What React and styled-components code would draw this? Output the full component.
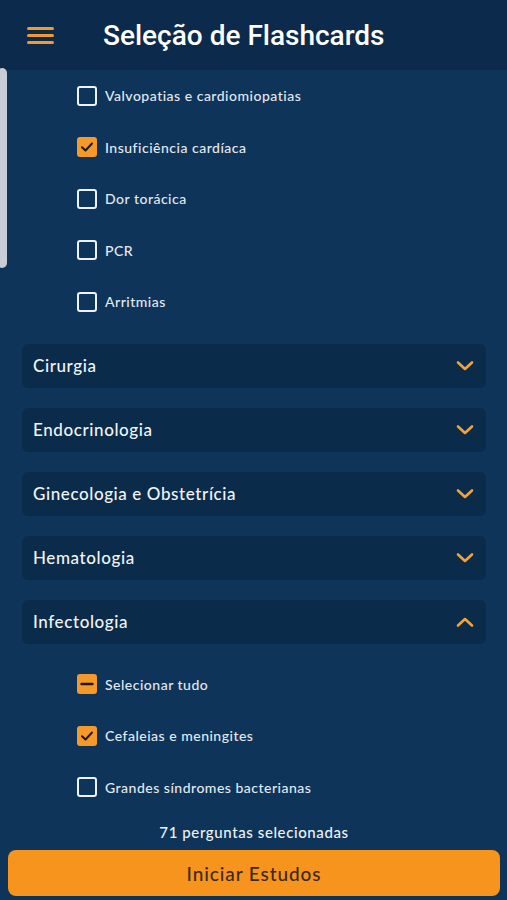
import React from "react";
import styled, { createGlobalStyle } from "styled-components";

const Global = createGlobalStyle`
  html, body { margin: 0; padding: 0; background: #0f345a; }
  * { box-sizing: border-box; }
`;

const Page = styled.div`
  width: 507px;
  height: 900px;
  display: flex;
  flex-direction: column;
  background: #0f345a;
  font-family: "Lato", "Open Sans", sans-serif;
  overflow: hidden;
  position: relative;
`;

const Header = styled.header`
  height: 70px;
  flex: none;
  background: #0c2a4b;
  display: flex;
  align-items: center;
  padding-left: 27px;
  gap: 49px;
`;

const Burger = styled.div`
  width: 27px;
  display: flex;
  flex-direction: column;
  gap: 4px;
  margin-top: 0;
  span { display: block; height: 3px; border-radius: 2px; background: #f39a2c; }
`;

const Title = styled.h1`
  margin: 0;
  font-family: Roboto, "Liberation Sans", sans-serif;
  font-weight: 500;
  font-size: 28px;
  color: #ffffff;
  margin-top: 1px;
`;

const Content = styled.main`
  flex: 1;
  position: relative;
  padding: 0 21px 0 22px;
`;

const ScrollThumb = styled.div`
  position: absolute;
  left: -3px;
  top: -2px;
  width: 10px;
  height: 200px;
  border-radius: 5px;
  background: #c9ced6;
`;

const Row = styled.label`
  height: 51.5px;
  display: flex;
  align-items: center;
  padding-left: 55px;
  gap: 8px;
  color: #e4e9f0;
  font-size: 14px;
  font-weight: 500;
  letter-spacing: 0.5px;
`;

const Box = styled.span`
  width: 20px;
  height: 20px;
  flex: none;
  border-radius: 3px;
  border: ${p => (p.$state === "off" ? "2px solid #eef2f6" : "none")};
  background: ${p => (p.$state === "off" ? "transparent" : "#f5992a")};
  display: flex;
  align-items: center;
  justify-content: center;
`;

const Group = styled.div`
  display: flex;
  flex-direction: column;
  gap: 20px;
  margin-top: ${p => p.$mt || 0}px;
`;

const AccHead = styled.div`
  height: 44px;
  border-radius: 6px;
  background: #0b2b4a;
  display: flex;
  align-items: center;
  justify-content: space-between;
  padding: 0 12px 0 11px;
  color: #f1f4f8;
  font-size: 17px;
  font-weight: 500;
  letter-spacing: 0.6px;
`;

const Children = styled.div`
  margin-top: 15px;
`;

const Footer = styled.footer`
  flex: none;
  display: flex;
  flex-direction: column;
  align-items: center;
  padding: 0 7px 4px 8px;
`;

const Count = styled.div`
  color: #eef2f6;
  font-size: 15px;
  font-weight: 500;
  letter-spacing: 0.6px;
  height: 36px;
  display: flex;
  align-items: center;
`;

const StartButton = styled.button`
  width: 100%;
  height: 46px;
  border: none;
  border-radius: 8px;
  background: #f7941e;
  color: #3b2a14;
  font-family: "Lato", "Open Sans", sans-serif;
  font-size: 19px;
  font-weight: 500;
  letter-spacing: 0.9px;
`;

const Check = () => (
  <svg width="14" height="14" viewBox="0 0 14 14">
    <path d="M2 7.2 L5.5 10.5 L12 3.5" fill="none" stroke="#1d1a14" strokeWidth="2" strokeLinecap="round" strokeLinejoin="round" />
  </svg>
);

const Dash = () => (
  <svg width="14" height="14" viewBox="0 0 14 14">
    <path d="M1.5 7 H12.5" stroke="#1d1a14" strokeWidth="2.4" strokeLinecap="round" />
  </svg>
);

const Chevron = ({ up }) => (
  <svg width="18" height="12" viewBox="0 0 18 12">
    <path d={up ? "M2 9.5 L9 3 L16 9.5" : "M2 2.5 L9 9 L16 2.5"} fill="none" stroke="#f2a33a" strokeWidth="2.6" strokeLinecap="round" strokeLinejoin="round" />
  </svg>
);

const Item = ({ state, children }) => (
  <Row>
    <Box $state={state}>{state === "on" ? <Check /> : state === "mixed" ? <Dash /> : null}</Box>
    {children}
  </Row>
);

const topItems = [
  ["Valvopatias e cardiomiopatias", "off"],
  ["Insuficiência cardíaca", "on"],
  ["Dor torácica", "off"],
  ["PCR", "off"],
  ["Arritmias", "off"],
];

const sections = ["Cirurgia", "Endocrinologia", "Ginecologia e Obstetrícia", "Hematologia"];

export default function App() {
  return (
    <Page>
      <Global />
      <Header>
        <Burger><span /><span /><span /></Burger>
        <Title>Seleção de Flashcards</Title>
      </Header>
      <Content>
        <ScrollThumb />
        {topItems.map(([t, s]) => (
          <Item key={t} state={s}>{t}</Item>
        ))}
        <Group $mt={16}>
          {sections.map(s => (
            <AccHead key={s}>
              {s}
              <Chevron />
            </AccHead>
          ))}
          <div>
            <AccHead>
              Infectologia
              <Chevron up />
            </AccHead>
            <Children>
              <Item state="mixed">Selecionar tudo</Item>
              <Item state="on">Cefaleias e meningites</Item>
              <Item state="off">Grandes síndromes bacterianas</Item>
            </Children>
          </div>
        </Group>
      </Content>
      <Footer>
        <Count>71 perguntas selecionadas</Count>
        <StartButton>Iniciar Estudos</StartButton>
      </Footer>
    </Page>
  );
}
